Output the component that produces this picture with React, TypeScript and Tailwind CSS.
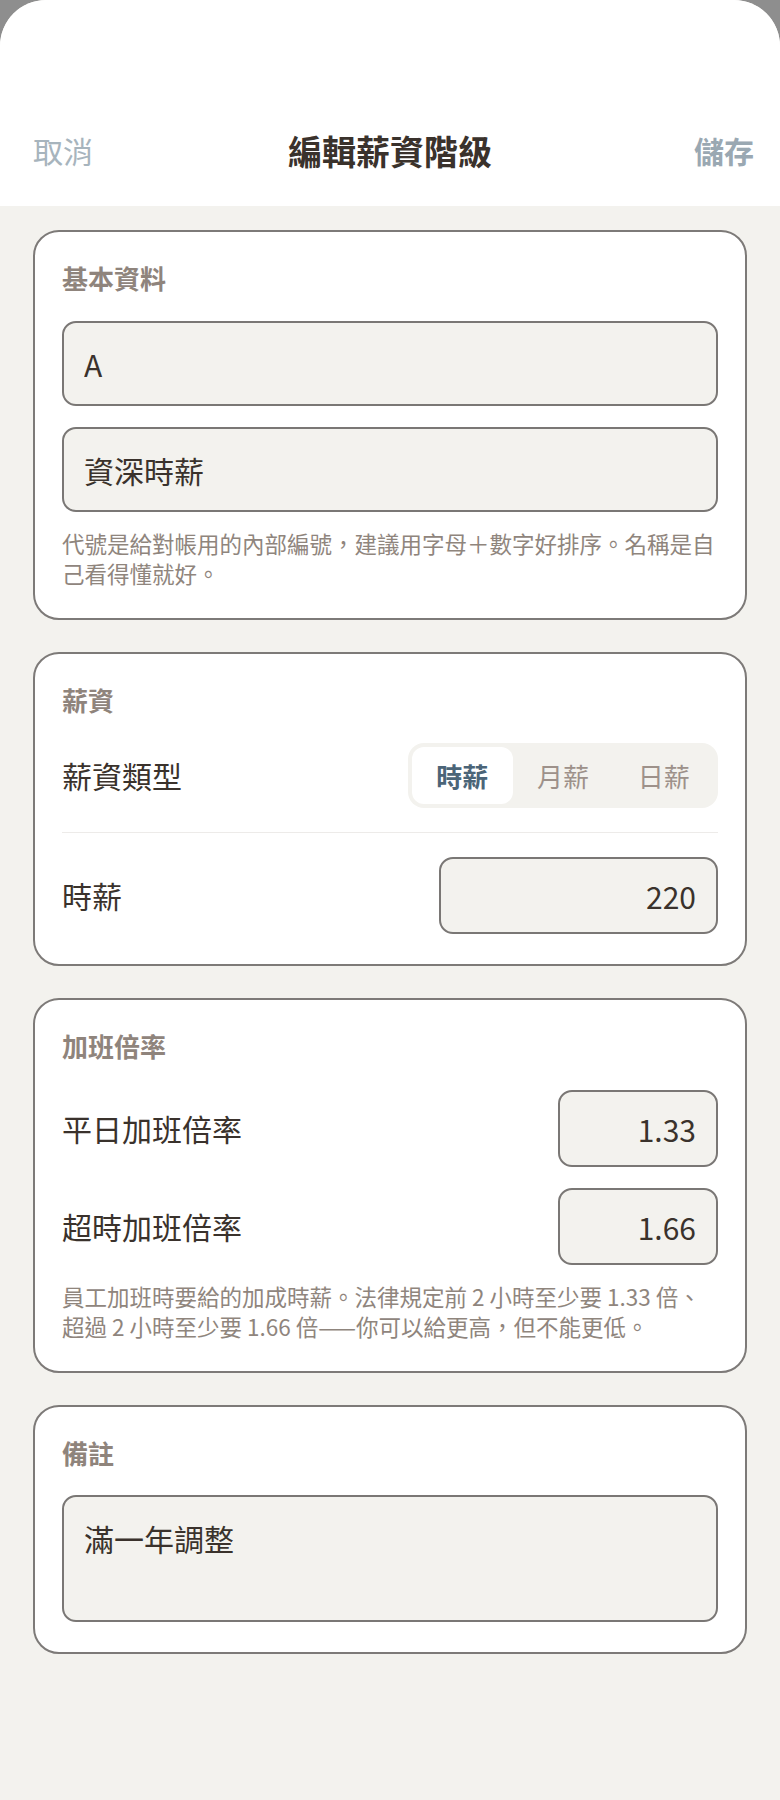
import { useState } from "react";

const font = { fontFamily: '"Noto Sans CJK TC", "Noto Sans", sans-serif' };

function Card({ title, children }: { title: string; children: React.ReactNode }) {
  return (
    <section className="rounded-[26px] border-2 border-[#7d7a78] bg-white px-[27px] pt-[28px] pb-[30px]">
      <h2 className="text-[26px] leading-[36px] font-bold text-[#8f847c]">{title}</h2>
      {children}
    </section>
  );
}

function Field({
  value,
  className = "",
}: {
  value: string;
  className?: string;
}) {
  return (
    <input
      defaultValue={value}
      className={`block rounded-[14px] border-2 border-[#7a7775] bg-[#f3f2ee] text-[30px] text-[#3a322c] outline-none ${className}`}
    />
  );
}

export default function App() {
  const [payType, setPayType] = useState("hourly");
  const types = [
    { id: "hourly", label: "時薪" },
    { id: "monthly", label: "月薪" },
    { id: "daily", label: "日薪" },
  ];

  return (
    <div className="min-h-[1800px] bg-[#8e8e8e]" style={font}>
      <div className="min-h-[1800px] overflow-hidden rounded-t-[46px] bg-[#f3f2ee]">
        <header className="bg-white pt-[94px]">
          <div className="grid h-[112px] grid-cols-[1fr_auto_1fr] items-center px-[26px]">
            <button className="justify-self-start pl-[7px] text-[30px] text-[#a7b4bd]">取消</button>
            <h1 className="text-[34px] font-bold text-[#3a322c]">編輯薪資階級</h1>
            <button className="justify-self-end text-[30px] font-semibold text-[#9aa8b2]">儲存</button>
          </div>
        </header>

        <main className="flex flex-col gap-[32px] px-[33px] pt-[24px] pb-[60px]">
          <Card title="基本資料">
            <Field value="A" className="mt-[25px] h-[85px] w-full px-[20px]" />
            <Field value="資深時薪" className="mt-[21px] h-[85px] w-full px-[20px]" />
            <p className="mt-[16px] text-[22.5px] leading-[30px] text-[#8f857d]">
              代號是給對帳用的內部編號，建議用字母＋數字好排序。名稱是自己看得懂就好。
            </p>
          </Card>

          <Card title="薪資">
            <div className="mt-[25px] flex items-center justify-between">
              <span className="text-[30px] text-[#3a322c]">薪資類型</span>
              <div className="flex h-[65px] w-[310px] rounded-[16px] bg-[#f3f2ee] p-[4px]">
                {types.map((t) => (
                  <button
                    key={t.id}
                    onClick={() => setPayType(t.id)}
                    className={
                      payType === t.id
                        ? "flex-1 rounded-[12px] bg-white text-[26px] font-bold text-[#4b6578]"
                        : "flex-1 rounded-[12px] text-[26px] text-[#9d918a]"
                    }
                  >
                    {t.label}
                  </button>
                ))}
              </div>
            </div>
            <div className="my-[24px] h-px bg-[#edebe9]" />
            <div className="flex items-center justify-between">
              <span className="text-[30px] text-[#3a322c]">時薪</span>
              <Field value="220" className="h-[77px] w-[279px] px-[20px] text-right" />
            </div>
          </Card>

          <Card title="加班倍率">
            <div className="mt-[26px] flex items-center justify-between">
              <span className="text-[30px] text-[#3a322c]">平日加班倍率</span>
              <Field value="1.33" className="h-[77px] w-[160px] px-[20px] text-right" />
            </div>
            <div className="mt-[21px] flex items-center justify-between">
              <span className="text-[30px] text-[#3a322c]">超時加班倍率</span>
              <Field value="1.66" className="h-[77px] w-[160px] px-[20px] text-right" />
            </div>
            <p className="mt-[16px] text-[22.5px] leading-[30px] text-[#8f857d]">
              員工加班時要給的加成時薪。法律規定前 2 小時至少要 1.33 倍、超過 2 小時至少要 1.66 倍——你可以給更高，但不能更低。
            </p>
          </Card>

          <Card title="備註">
            <textarea
              defaultValue="滿一年調整"
              className="mt-[24px] block h-[127px] w-full resize-none rounded-[14px] border-2 border-[#7a7775] bg-[#f3f2ee] px-[20px] pt-[20px] text-[30px] leading-[42px] text-[#3a322c] outline-none"
            />
          </Card>
        </main>
      </div>
    </div>
  );
}
